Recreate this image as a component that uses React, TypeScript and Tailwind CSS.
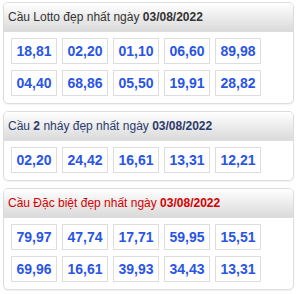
import React from "react";

type Panel = {
  title: React.ReactNode;
  color: string;
  rows: string[][];
};

const panels: Panel[] = [
  {
    title: (
      <>
        Cầu Lotto đẹp nhất ngày <b className="font-bold">03/08/2022</b>
      </>
    ),
    color: "text-[#333333]",
    rows: [
      ["18,81", "02,20", "01,10", "06,60", "89,98"],
      ["04,40", "68,86", "05,50", "19,91", "28,82"],
    ],
  },
  {
    title: (
      <>
        Cầu <b className="font-bold">2</b> nháy đẹp nhất ngày <b className="font-bold">03/08/2022</b>
      </>
    ),
    color: "text-[#2b3a6b]",
    rows: [["02,20", "24,42", "16,61", "13,31", "12,21"]],
  },
  {
    title: (
      <>
        Cầu Đặc biệt đẹp nhất ngày <b className="font-bold">03/08/2022</b>
      </>
    ),
    color: "text-[#d40000]",
    rows: [
      ["79,97", "47,74", "17,71", "59,95", "15,51"],
      ["69,96", "16,61", "39,93", "34,43", "13,31"],
    ],
  },
];

export default function App() {
  return (
    <div
      className="w-[300px] h-[294px] bg-white pt-[2px] pl-[3px] pr-[6px] flex flex-col gap-[7px]"
      style={{ fontFamily: '"Liberation Sans", Arial, sans-serif' }}
    >
      {panels.map((p, i) => (
        <div
          key={i}
          className="border border-[#dddddd] rounded-[5px] bg-white overflow-hidden shadow-[0_1px_2px_rgba(0,0,0,0.06)]"
        >
          <div
            className={`h-[29px] flex items-center pl-[4px] text-[12px] bg-gradient-to-b from-[#ffffff] to-[#dadada] border-b border-[#dddddd] ${p.color}`}
          >
            <span>{p.title}</span>
          </div>
          <div className="pt-[6px] pb-[7px] pl-[7px] flex flex-col gap-[6px]">
            {p.rows.map((r, j) => (
              <div key={j} className="flex gap-[5px]">
                {r.map((n, k) => (
                  <div
                    key={k}
                    className="w-[46px] h-[26px] border border-[#dddddd] flex items-center justify-center text-[14px] font-bold text-[#2a55e5]"
                  >
                    {n}
                  </div>
                ))}
              </div>
            ))}
          </div>
        </div>
      ))}
    </div>
  );
}
